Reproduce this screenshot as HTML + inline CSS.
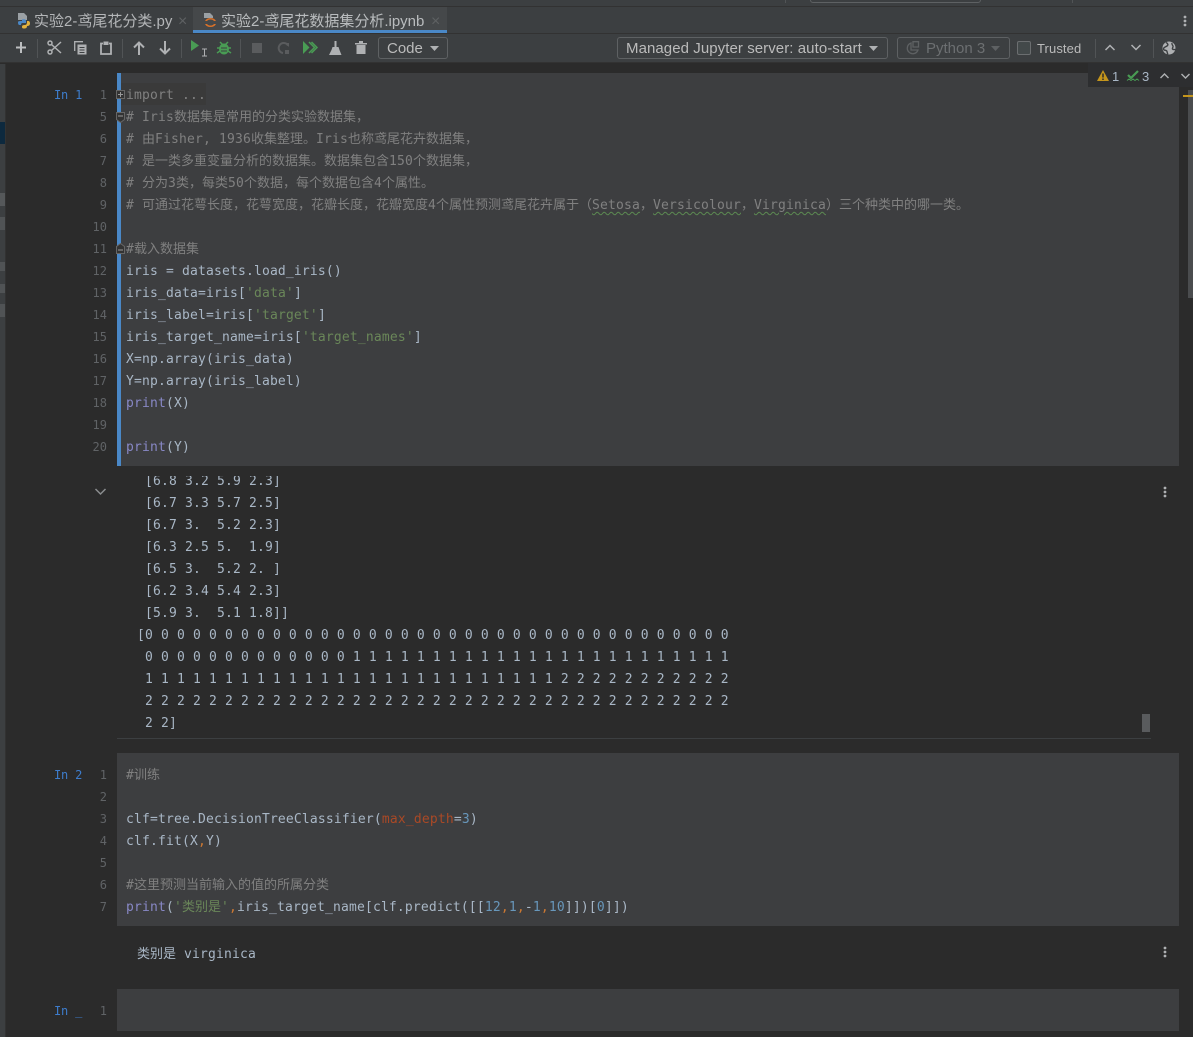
<!DOCTYPE html>
<html><head><meta charset="utf-8">
<style>
html,body{margin:0;padding:0;background:#2b2b2b;}
#r{position:relative;width:1193px;height:1037px;overflow:hidden;background:#2b2b2b;font-family:"Liberation Sans","Noto Sans CJK SC",sans-serif;color:#bbb;}
.a{position:absolute;}
pre{margin:0;position:absolute;font-family:"DejaVu Sans Mono","Noto Sans CJK SC",monospace;font-size:13px;line-height:22px;letter-spacing:.17px;color:#a9b7c6;white-space:pre;}
pre b{font-weight:normal;font-family:"Noto Sans CJK SC",sans-serif;letter-spacing:0;font-size:13px;line-height:1px;}
pre.n{text-align:right;color:#606366;width:40px;font-size:12px;letter-spacing:0;}
.c{background:#3d3e40;left:117px;width:1062px;}
.m{color:#808080}.p{color:#8888c6}.s{color:#6a8759}.d{color:#6897bb}.o{color:#cc7832}.k{color:#aa4926}
.w{text-decoration:underline wavy #5c8a52 1px;text-underline-offset:2px;}
.in{color:#3d7ccc;font-family:"DejaVu Sans Mono",monospace;font-size:12px;letter-spacing:-.2px;position:absolute;left:54px;}
.tb{font-size:15px;color:#bbb;white-space:nowrap;position:absolute;}
.box{position:absolute;border:1px solid #5e6163;border-radius:3px;box-sizing:border-box;height:22px;top:37px;}
.sep{position:absolute;width:1px;background:#515456;top:39px;height:19px;}
svg{position:absolute;overflow:visible;}
</style></head><body><div id="r">

<!-- top strip -->
<div class="a" style="left:0;top:0;width:1193px;height:6px;background:#3c3f41;border-bottom:1px solid #323232;"></div>
<div class="a" style="left:785px;top:0;width:1px;height:3px;background:#515456"></div>
<div class="a" style="left:810px;top:-4px;width:171px;height:7px;border:1px solid #5e6163;border-radius:3px;box-sizing:border-box"></div>
<div class="a" style="left:1072px;top:0;width:1px;height:3px;background:#515456"></div>

<!-- tabs -->
<div class="a" style="left:0;top:7px;width:1193px;height:26px;background:#3c3f41;border-bottom:1px solid #323232;"></div>
<div class="a" style="left:193px;top:7px;width:254px;height:26px;background:#45484a;"></div>
<div class="a" style="left:193px;top:30px;width:254px;height:3px;background:#4a88c7;"></div>
<svg style="left:16px;top:13px" width="16" height="16" viewBox="0 0 16 16"><path d="M2 0h6l3 3v4H2z" fill="#9aa0a4"/><path d="M6 6.500c2-.5 4-.5 4 1.500v2H6.500C5.500 10 5 10.500 5 12H3.500C2.500 12 2 11 2 9.500S3 8 6 8z" fill="#4a88c7"/><path d="M11 8h1c1.500 0 2 1 2 2.500S13 13 11 13c0 2-1 2.500-3 2.500S6 14.500 6 13.500 7 12 8.500 12 11 11.500 11 9z" fill="#e2b23e"/></svg>
<div class="tb" style="left:34px;top:10px;color:#b4b6b8">实验2-鸢尾花分类.py</div>
<div class="a" style="left:178px;top:13px;color:#5e6163;font-size:16px">×</div>
<svg style="left:203px;top:13px" width="16" height="16" viewBox="0 0 16 16"><path d="M1 0h6l3 3v2H1z" fill="#9aa0a4"/><path d="M2 8a6 5 0 0 1 11 0h-2a4 3 0 0 0-7 0zM2 11a6 5 0 0 0 11 0h-2a4 3 0 0 1-7 0z" fill="#d9722a"/></svg>
<div class="tb" style="left:221px;top:10px;color:#b9bcbe">实验2-鸢尾花数据集分析.ipynb</div>
<div class="a" style="left:431px;top:13px;color:#5e6163;font-size:16px">×</div>
<svg style="left:1183px;top:15px" width="4" height="12"><circle cx="2" cy="2" r="1.400" fill="#afb1b3"/><circle cx="2" cy="6" r="1.400" fill="#afb1b3"/><circle cx="2" cy="10" r="1.400" fill="#afb1b3"/></svg>

<!-- toolbar -->
<div class="a" style="left:0;top:34px;width:1193px;height:29px;background:#3c3f41;border-bottom:1px solid #323232;box-sizing:border-box"></div>
<svg style="left:15px;top:41px" width="12" height="13"><path d="M6 1v11M1 6.500h10" stroke="#bcbec0" stroke-width="2"/></svg>
<div class="sep" style="left:37px"></div>
<svg style="left:47px;top:40px" width="15" height="15" fill="none" stroke="#afb1b3" stroke-width="1.500"><circle cx="3" cy="3" r="2"/><circle cx="3" cy="12" r="2"/><path d="M4.500 4.500 14 13M4.500 10.500 14 2"/></svg>
<svg style="left:74px;top:41px" width="13" height="14" fill="none" stroke="#afb1b3"><path d="M.7 10V.7H9" stroke-width="1.300"/><path d="M3.500 3.500h9v10h-9z" fill="#afb1b3" stroke="none"/><path d="M5.500 6.500h5M5.500 9h5M5.500 11.500h5" stroke="#3c3f41"/></svg>
<svg style="left:100px;top:41px" width="13" height="14" fill="none" stroke="#afb1b3" stroke-width="1.800"><path d="M3 2.500H1v10.500h10V2.500H9"/><path d="M3.500 .5h5v3.500h-5z" fill="#afb1b3" stroke="none"/></svg>
<div class="sep" style="left:122px"></div>
<svg style="left:133px;top:41px" width="12" height="14" fill="none" stroke="#afb1b3" stroke-width="2"><path d="M6 14V2M1 6.500 6 1.500l5 5"/></svg>
<svg style="left:159px;top:41px" width="12" height="14" fill="none" stroke="#afb1b3" stroke-width="2"><path d="M6 0v12M1 7.500l5 5 5-5"/></svg>
<div class="sep" style="left:181px"></div>
<svg style="left:191px;top:40px" width="20" height="17"><path d="M0 0v11l8-5.500z" fill="#499c54"/><path d="M11 9h5M13.500 9v7M11 16h5" stroke="#afb1b3" stroke-width="1" fill="none"/></svg>
<svg style="left:217px;top:41px" width="14" height="14"><ellipse cx="7" cy="8" rx="5" ry="5.500" fill="#499c54"/><path d="M3 1l3 3M11 1 8 4M0 7h3M11 7h3M0 12l3-2M14 12l-3-2" stroke="#499c54" stroke-width="1.500"/><path d="M4 7h6M4 10h6" stroke="#3c3f41"/></svg>
<div class="sep" style="left:240px"></div>
<div class="a" style="left:252px;top:43px;width:10px;height:10px;background:#5a5c5e"></div>
<svg style="left:277px;top:42px" width="13" height="13" fill="none" stroke="#5a5c5e" stroke-width="2"><path d="M11 3.500A5 5 0 1 0 6 11"/><path d="M8 1h4v4M8 8h4v4H8z" fill="#5a5c5e" stroke="none"/></svg>
<svg style="left:303px;top:41px" width="14" height="13" fill="none" stroke="#499c54"><path d="M0 0v13l6.500-6.500z" fill="#499c54" stroke="none"/><path d="M6 1l5.500 5.500L6 12M8.500 1 14 6.500 8.500 12" stroke-width="1.500"/></svg>
<svg style="left:329px;top:41px" width="13" height="14"><path d="M5.500 0h2v6h-2zM3.500 6h6l1 3h-8zM2.500 9h8l2 5H0z" fill="#afb1b3"/></svg>
<svg style="left:355px;top:41px" width="12" height="13"><path d="M0 2h12v1.500H0zM4 0h4v2H4zM1.500 4h9v9h-9z" fill="#afb1b3"/></svg>
<div class="box" style="left:378px;width:70px"></div>
<div class="tb" style="left:387px;top:40px">Code</div>
<svg style="left:430px;top:46px" width="9" height="5"><path d="M0 0h9L4.500 5z" fill="#afb1b3"/></svg>
<div class="box" style="left:617px;width:271px"></div>
<div class="tb" style="left:626px;top:40px;letter-spacing:.07px">Managed Jupyter server: auto-start</div>
<svg style="left:869px;top:46px" width="9" height="5"><path d="M0 0h9L4.500 5z" fill="#afb1b3"/></svg>
<div class="box" style="left:897px;width:113px"></div>
<svg style="left:906px;top:41px" width="13" height="14" fill="none" stroke="#5e6163" stroke-width="1.300"><path d="M5 2a5.500 5.500 0 1 0 7 7H5z"/><path d="M7 .7h5.500V6H7z"/></svg>
<div class="tb" style="left:926px;top:40px;color:#6c6f71">Python 3</div>
<svg style="left:991px;top:46px" width="9" height="5"><path d="M0 0h9L4.500 5z" fill="#5e6163"/></svg>
<div class="a" style="left:1017px;top:41px;width:14px;height:14px;border:1px solid #6b6e70;border-radius:2px;box-sizing:border-box;background:#43494a"></div>
<div class="tb" style="left:1037px;top:41px;font-size:13px;letter-spacing:.1px">Trusted</div>
<div class="sep" style="left:1095px"></div>
<svg style="left:1105px;top:44px" width="10" height="7" fill="none" stroke="#afb1b3" stroke-width="1.500"><path d="M.5 6 5 1.500 9.500 6"/></svg>
<svg style="left:1131px;top:44px" width="10" height="7" fill="none" stroke="#afb1b3" stroke-width="1.500"><path d="M.5 1 5 5.500 9.500 1"/></svg>
<div class="sep" style="left:1153px"></div>
<svg style="left:1162px;top:41px" width="14" height="14"><circle cx="7" cy="7" r="6.500" fill="#afb1b3"/><path d="M4 1.500c2 1 2.500 2.500 1 3.500S1.500 6 1.500 8 4.500 8.500 5 10.500 5.500 13 6 13.500M10 2c-.5 1.500.5 2 1 3s-1 2-.5 3 2.500.5 3 .5" stroke="#3c3f41" stroke-width="1.400" fill="none"/></svg>

<!-- left strip -->
<div class="a" style="left:0;top:64px;width:6px;height:973px;background:#3c3f41;border-right:1px solid #323232;box-sizing:border-box"></div>
<div class="a" style="left:0;top:122px;width:5px;height:22px;background:#0d293e"></div>
<div class="a" style="left:0;top:193px;width:5px;height:13px;background:#55585a"></div>
<div class="a" style="left:0;top:217px;width:5px;height:13px;background:#505355"></div>
<div class="a" style="left:0;top:262px;width:5px;height:9px;background:#505355"></div>
<div class="a" style="left:0;top:284px;width:5px;height:9px;background:#505355"></div>
<div class="a" style="left:0;top:304px;width:5px;height:13px;background:#505355"></div>

<!-- cell 1 -->
<div class="a c" style="top:73px;height:393px"></div>
<div class="a" style="left:117px;top:73px;width:4px;height:393px;background:#4a88c7"></div>
<div class="a" style="left:121px;top:83px;width:85px;height:22px;background:#3a3a3a"></div>
<div class="in" style="top:88px">In 1</div>
<pre class="n" style="left:67px;top:84px">1
5
6
7
8
9
10
11
12
13
14
15
16
17
18
19
20</pre>
<pre style="left:126px;top:85px"><span class="m">import ...</span>
<span class="m"># Iris<b>数据集是常用的分类实验数据集，</b></span>
<span class="m"># <b>由</b>Fisher, 1936<b>收集整理。</b>Iris<b>也称鸢尾花卉数据集，</b></span>
<span class="m"># <b>是一类多重变量分析的数据集。数据集包含</b>150<b>个数据集，</b></span>
<span class="m"># <b>分为</b>3<b>类，每类</b>50<b>个数据，每个数据包含</b>4<b>个属性。</b></span>
<span class="m"># <b>可通过花萼长度，花萼宽度，花瓣长度，花瓣宽度</b>4<b>个属性预测鸢尾花卉属于（</b><span class="w">Setosa</span><b>，</b><span class="w">Versicolour</span><b>，</b><span class="w">Virginica</span><b>）</b><b>三个种类中的哪一类。</b></span>

<span class="m">#<b>载入数据集</b></span>
iris = datasets.load_iris()
iris_data=iris[<span class="s">'data'</span>]
iris_label=iris[<span class="s">'target'</span>]
iris_target_name=iris[<span class="s">'target_names'</span>]
X=np.array(iris_data)
Y=np.array(iris_label)
<span class="p">print</span>(X)

<span class="p">print</span>(Y)</pre>
<!-- fold markers -->
<svg style="left:116px;top:90px" width="9" height="9"><rect x=".5" y=".5" width="8" height="8" fill="#333" stroke="#666"/><path d="M2 4.500h5M4.500 2v5" stroke="#999"/></svg>
<svg style="left:116px;top:112px" width="9" height="11"><path d="M.5.500h8v7l-4 3-4-3z" fill="#333" stroke="#666"/><path d="M2 4h5" stroke="#999"/></svg>
<svg style="left:116px;top:243px" width="9" height="11"><path d="M.5 10.500h8v-7l-4-3-4 3z" fill="#333" stroke="#666"/><path d="M2 7h5" stroke="#999"/></svg>

<!-- status pill -->
<div class="a" style="left:1088px;top:63px;width:105px;height:24px;background:#2d2e30"></div>
<svg style="left:1097px;top:70px" width="12" height="11"><path d="M6 0l6 11H0z" fill="#c4951c"/><path d="M6 3.500v4M6 8.500v1.500" stroke="#2b2b2b" stroke-width="1.500"/></svg>
<div class="tb" style="left:1112px;top:69px;font-size:13px;color:#a9b7c6">1</div>
<svg style="left:1127px;top:70px" width="12" height="12" fill="none" stroke="#499c54"><path d="M1 5l3 3 7-7" stroke-width="2.200"/><path d="M0 10.500l2-1.500 2 1.500 2-1.500 2 1.500 2-1.500 2 1.500"/></svg>
<div class="tb" style="left:1142px;top:69px;font-size:13px;color:#a9b7c6">3</div>
<svg style="left:1160px;top:73px" width="9" height="6" fill="none" stroke="#afb1b3" stroke-width="1.400"><path d="M.5 5 4.500 1l4 4"/></svg>
<svg style="left:1181px;top:73px" width="9" height="6" fill="none" stroke="#afb1b3" stroke-width="1.400"><path d="M.5 1l4 4 4-4"/></svg>
<!-- scrollbar -->
<div class="a" style="left:1188px;top:90px;width:5px;height:208px;background:#4a4c4e"></div>
<div class="a" style="left:1183px;top:95px;width:10px;height:2px;background:#c4951c"></div>

<!-- output 1 -->
<svg style="left:95px;top:488px" width="11" height="7" fill="none" stroke="#8a8d8f" stroke-width="1.500"><path d="M.5 1 5.500 6l5-5"/></svg>
<svg style="left:1163px;top:486px" width="4" height="12"><circle cx="2" cy="2" r="1.400" fill="#afb1b3"/><circle cx="2" cy="6" r="1.400" fill="#afb1b3"/><circle cx="2" cy="10" r="1.400" fill="#afb1b3"/></svg>
<div class="a" style="left:130px;top:476px;width:1000px;height:258px;overflow:hidden">
<pre style="left:7px;top:-5px"> [6.8 3.2 5.9 2.3]
 [6.7 3.3 5.7 2.5]
 [6.7 3.  5.2 2.3]
 [6.3 2.5 5.  1.9]
 [6.5 3.  5.2 2. ]
 [6.2 3.4 5.4 2.3]
 [5.9 3.  5.1 1.8]]
[0 0 0 0 0 0 0 0 0 0 0 0 0 0 0 0 0 0 0 0 0 0 0 0 0 0 0 0 0 0 0 0 0 0 0 0 0
 0 0 0 0 0 0 0 0 0 0 0 0 0 1 1 1 1 1 1 1 1 1 1 1 1 1 1 1 1 1 1 1 1 1 1 1 1
 1 1 1 1 1 1 1 1 1 1 1 1 1 1 1 1 1 1 1 1 1 1 1 1 1 1 2 2 2 2 2 2 2 2 2 2 2
 2 2 2 2 2 2 2 2 2 2 2 2 2 2 2 2 2 2 2 2 2 2 2 2 2 2 2 2 2 2 2 2 2 2 2 2 2
 2 2]</pre></div>
<div class="a" style="left:1142px;top:714px;width:8px;height:18px;background:#595b5d"></div>
<div class="a" style="left:117px;top:738px;width:1034px;height:1px;background:#3c3f41"></div>

<!-- cell 2 -->
<div class="a c" style="top:753px;height:173px"></div>
<div class="in" style="top:768px">In 2</div>
<pre class="n" style="left:67px;top:764px">1
2
3
4
5
6
7</pre>
<pre style="left:126px;top:765px"><span class="m">#<b>训练</b></span>

clf=tree.DecisionTreeClassifier(<span class="k">max_depth</span>=<span class="d">3</span>)
clf.fit(X<span class="o">,</span>Y)

<span class="m">#<b>这里预测当前输入的值的所属分类</b></span>
<span class="p">print</span>(<span class="s">'<b>类别是</b>'</span><span class="o">,</span>iris_target_name[clf.predict([[<span class="d">12</span><span class="o">,</span><span class="d">1</span><span class="o">,</span>-<span class="d">1</span><span class="o">,</span><span class="d">10</span>]])[<span class="d">0</span>]])</pre>

<!-- output 2 -->
<pre style="left:137px;top:944px"><b>类别是</b> virginica</pre>
<svg style="left:1163px;top:946px" width="4" height="12"><circle cx="2" cy="2" r="1.400" fill="#afb1b3"/><circle cx="2" cy="6" r="1.400" fill="#afb1b3"/><circle cx="2" cy="10" r="1.400" fill="#afb1b3"/></svg>

<!-- cell 3 -->
<div class="a c" style="top:989px;height:42px"></div>
<div class="in" style="top:1004px">In _</div>
<pre class="n" style="left:67px;top:1000px">1</pre>

</div></body></html>
